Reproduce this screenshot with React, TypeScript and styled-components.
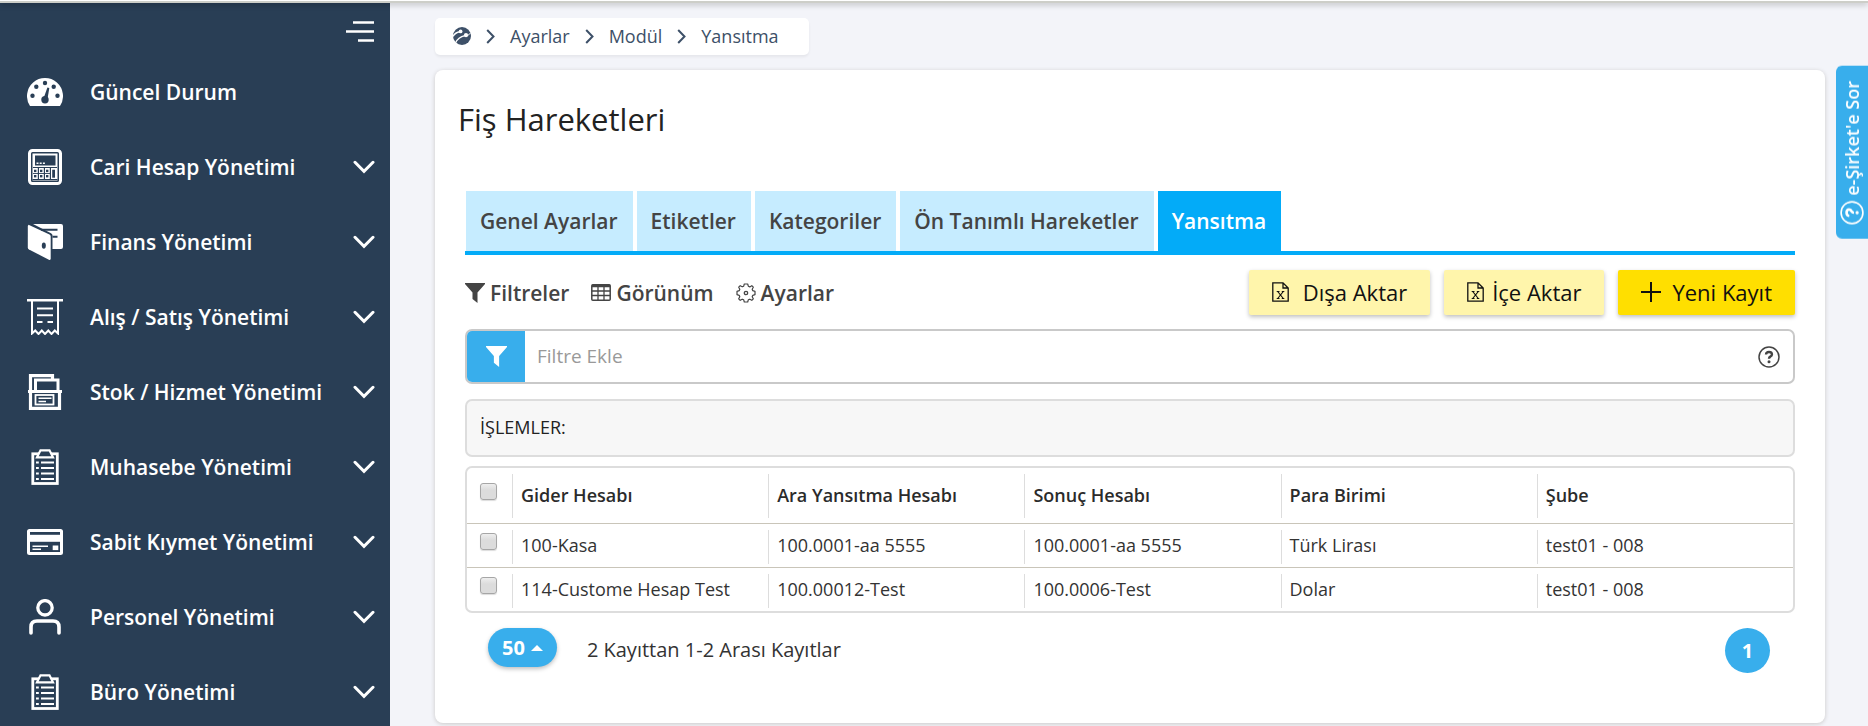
import React from "react";
import styled, { createGlobalStyle, css } from "styled-components";

const navy = "#293e55";
const sky = "#03abf8";
const blue = "#38aeec";

const GlobalStyle = createGlobalStyle`
  * { box-sizing: border-box; }
  body {
    margin: 0;
    background: #f3f4f9;
    color: #2b2b2b;
    font-family: "Open Sans", "Noto Sans", sans-serif;
    font-size: 18px;
  }
  button, input { font-family: inherit; }
  a { color: inherit; text-decoration: none; }
`;

const TopStrip = styled.div`
  position: fixed;
  top: 0;
  left: 0;
  right: 0;
  height: 3px;
  z-index: 2;
  border-top: 1px solid #fff;
  background: #cdcec8;
  box-shadow: 0 1px 6px rgba(0, 0, 0, 0.35);
`;

const Shell = styled.div`
  display: flex;
  min-height: 100vh;
`;

const Sidebar = styled.nav`
  flex: none;
  width: 390px;
  height: 100vh;
  overflow: hidden;
  position: sticky;
  top: 0;
  background: ${navy};
  color: #fff;
`;

const SidebarTop = styled.div`
  display: flex;
  justify-content: flex-end;
  align-items: flex-start;
  height: 54px;
  padding: 20px 16px 0 0;
`;

const IconButton = styled.button`
  display: flex;
  align-items: center;
  justify-content: center;
  padding: 0;
  border: 0;
  background: none;
  color: inherit;
  cursor: pointer;
`;

const Menu = styled.ul`
  margin: 0;
  padding: 0;
  list-style: none;
`;

const MenuLink = styled.a`
  display: flex;
  align-items: center;
  height: 75px;
  padding: 0 15px 0 27px;
  font-size: 21px;
  font-weight: 600;
  svg { flex: none; }
`;

const MenuText = styled.span`
  flex: 1;
  padding-left: 27px;
`;

const Main = styled.main`
  flex: 1;
  min-width: 0;
  padding: 18px 43px 3px 45px;
`;

const Crumbs = styled.nav`
  display: flex;
  align-items: center;
  gap: 15px;
  width: max-content;
  height: 37px;
  padding: 0 30px 0 18px;
  border-radius: 5px;
  background: #fff;
  color: #3d5068;
  box-shadow: 0 2px 3px rgba(0, 0, 0, 0.06);
`;

const CrumbLink = styled.a`
  display: flex;
  line-height: 24px;
  padding-bottom: 1px;
`;

const Card = styled.section`
  margin-top: 15px;
  padding: 29px 30px 50px;
  border-radius: 8px;
  background: #fff;
  box-shadow: 0 1px 4px rgba(60, 50, 30, 0.22);
`;

const Title = styled.h1`
  margin: 0 -7px 52px;
  font-size: 31px;
  line-height: 40px;
  font-weight: 400;
  color: #222;
`;

const Tabs = styled.div`
  display: flex;
  gap: 4px;
  padding-left: 1px;
  border-bottom: 4px solid ${sky};
`;

const Tab = styled.a<{ $active?: boolean }>`
  height: 60px;
  padding: 0 15px 0 14px;
  line-height: 60px;
  font-size: 21px;
  font-weight: 600;
  white-space: nowrap;
  background: #c6ecff;
  color: #444;
  ${(p) =>
    p.$active &&
    css`
      background: ${sky};
      color: #fff;
    `}
`;

const Toolbar = styled.div`
  display: flex;
  align-items: center;
  justify-content: space-between;
  margin-top: 15px;
`;

const Group = styled.div<{ $gap: number }>`
  display: flex;
  align-items: center;
  gap: ${(p) => p.$gap}px;
`;

const ToolButton = styled(IconButton)`
  gap: 5px;
  font-size: 21px;
  font-weight: 600;
  line-height: 30px;
  color: #444;
`;

const ActionButton = styled.button<{ $strong?: boolean; $gap: number }>`
  display: flex;
  align-items: center;
  gap: ${(p) => p.$gap}px;
  height: 45px;
  padding: 0 23px 2px;
  border: 0;
  border-radius: 2px;
  background: ${(p) => (p.$strong ? "#ffdf00" : "#fff5ab")};
  color: #111;
  font-size: 22px;
  font-weight: 500;
  white-space: nowrap;
  box-shadow: 0 2px 4px rgba(0, 0, 0, 0.25);
  cursor: pointer;
`;

const FilterBox = styled.div`
  display: flex;
  height: 55px;
  margin-top: 14px;
  border: 2px solid #c9c9c9;
  border-radius: 7px;
  overflow: hidden;
`;

const FilterButton = styled(IconButton)`
  width: 58px;
  background: ${blue};
  color: #fff;
`;

const FilterInput = styled.input`
  flex: 1;
  min-width: 0;
  padding: 0 12px 2px;
  border: 0;
  outline: 0;
  background: none;
  font-size: 19px;
  &::placeholder { color: #999; opacity: 1; }
`;

const HelpButton = styled(IconButton)`
  width: 48px;
  color: #444;
`;

const Operations = styled.div`
  height: 58px;
  margin-top: 15px;
  padding: 0 13px;
  border: 2px solid #ddd;
  border-radius: 7px;
  background: #f7f7f7;
  line-height: 52px;
  font-weight: 500;
  color: #222;
`;

const TableFrame = styled.div`
  margin-top: 9px;
  border: 2px solid #ddd;
  border-radius: 7px;
  overflow: hidden;
`;

const Table = styled.table`
  width: 100%;
  table-layout: fixed;
  border-spacing: 0;
  text-align: left;
`;

const CheckCol = styled.col`
  width: 45px;
`;

const HeadCell = styled.th`
  padding: 6px 0 5px;
  vertical-align: top;
  font-weight: 600;
`;

const BodyCell = styled.td`
  padding: 6px 0 3px;
  border-top: 1px solid #c9c5b9;
  vertical-align: top;
  color: #333;
`;

const CellText = styled.div<{ $head?: boolean }>`
  height: ${(p) => (p.$head ? 44 : 34)}px;
  padding-left: 8px;
  border-left: 1px solid #ddd;
  line-height: ${(p) => (p.$head ? 42 : 30)}px;
  white-space: nowrap;
`;

const Check = styled.input.attrs({ type: "checkbox" })<{ $head?: boolean }>`
  appearance: none;
  display: block;
  width: 17px;
  height: 17px;
  margin: ${(p) => (p.$head ? 9 : 3)}px 0 0 13px;
  border: 1px solid #a6a6a6;
  border-radius: 3px;
  background: linear-gradient(#eee, #dcdcdc 40%);
  box-shadow: 0 1px 1px rgba(0, 0, 0, 0.14);
  &:checked { background: ${blue}; }
`;

const Footer = styled.div`
  display: flex;
  align-items: flex-start;
  gap: 30px;
  margin-top: 15px;
  padding: 0 25px 0 23px;
`;

const PageSize = styled.button`
  display: flex;
  align-items: center;
  gap: 6px;
  height: 39px;
  padding: 0 14px;
  border: 0;
  border-radius: 20px;
  background: ${blue};
  color: #fff;
  font-size: 20px;
  font-weight: 700;
  box-shadow: 0 2px 4px rgba(0, 0, 0, 0.25);
  cursor: pointer;
`;

const Summary = styled.p`
  flex: 1;
  margin: 0;
  font-size: 20px;
  line-height: 44px;
  color: #333;
`;

const PageLink = styled.a`
  width: 45px;
  height: 45px;
  border-radius: 23px;
  background: ${blue};
  color: #fff;
  font-size: 20px;
  font-weight: 700;
  line-height: 45px;
  text-align: center;
`;

const AskButton = styled.button`
  position: fixed;
  top: 66px;
  right: 0;
  z-index: 3;
  display: flex;
  align-items: center;
  gap: 5px;
  width: 32px;
  padding: 14px 0 15px;
  border: 0;
  border-radius: 0 6px 6px 0;
  background: ${blue};
  color: #fff;
  font-size: 18px;
  font-weight: 600;
  white-space: nowrap;
  writing-mode: vertical-rl;
  transform: rotate(180deg);
  cursor: pointer;
  svg { transform: rotate(90deg); }
`;

const Svg = ({ w, h, children }: { w: number; h: number; children: React.ReactNode }) => (
  <svg width={w} height={h} viewBox={`0 0 ${w} ${h}`} fill="none" stroke="currentColor" aria-hidden="true">
    {children}
  </svg>
);

const Gauge = () => (
  <Svg w={36} h={36}>
    <path d="M3 32A18 18 0 1 1 33 32Z" fill="currentColor" stroke="none" />
    <g fill={navy} stroke="none">
      <circle cx="18" cy="9" r="2.2" />
      <circle cx="9.3" cy="12.7" r="2.2" />
      <circle cx="26.7" cy="12.7" r="2.2" />
      <circle cx="5.5" cy="21.7" r="2.2" />
      <circle cx="30.5" cy="21.7" r="2.2" />
      <circle cx="18" cy="25.7" r="3.7" />
      <path d="M20.4 13.5l1.9.4-1.8 11-3.8-.8z" />
    </g>
  </Svg>
);

const Calculator = () => (
  <Svg w={36} h={36}>
    <rect x="2.5" y="1.5" width="31" height="33" rx="3" strokeWidth="3" />
    <rect x="5.5" y="4.5" width="25" height="27" fill="currentColor" stroke="none" />
    <g fill={navy} stroke="none">
      <rect x="8" y="6.5" width="20.5" height="10" />
      <rect x="6" y="18" width="24" height="1" />
      {[20.7, 26].map((y) => [7, 13, 19].map((x) => <rect key={`${x}-${y}`} x={x} y={y} width="2.4" height="2.4" />))}
      {[10.8, 16.8, 22.8].map((x) => <rect key={x} x={x} y="19" width="1.2" height="12" />)}
      <rect x="6" y="24" width="17" height="0.9" />
      <rect x="25.2" y="20.7" width="2.8" height="8" />
      <rect x="5.5" y="30" width="25" height="1" />
    </g>
    <path d="M9.5 14.2h2M12.7 14.2h2M15.9 14.2h2" strokeWidth="1.6" />
  </Svg>
);

const Wallet = () => (
  <Svg w={36} h={36}>
    <path d="M6 0H34a2 2 0 0 1 2 2V23a2 2 0 0 1-2 2H25.5V11.5Q25.5 10 24 9.3Z" fill="currentColor" stroke="none" />
    <path d="M1.5.8L22.5 10.5q1.2.7 1.2 2V34.5q0 2-1.8 1.2L2 25.5Q.8 24.8.8 23.5V2z" fill="currentColor" stroke="none" />
    <path d="M14 5.8H30.5M25.5 12.7H30.5" stroke={navy} strokeWidth="2" />
    <ellipse cx="16.8" cy="21.6" rx="2" ry="3.2" fill={navy} stroke="none" />
  </Svg>
);

const Receipt = () => (
  <Svg w={36} h={36}>
    <path d="M0 1.3H36" strokeWidth="2.4" />
    <path d="M5 2V34.5L8.2 31.5 11.5 35 14.8 31.5 18 35 21.3 31.5 24.5 35 27.8 31.5 31 34.5V2M10 9.5H26M10 16.3H26M10 23H15.5M20.5 23H26" strokeWidth="2" />
  </Svg>
);

const Stock = () => (
  <Svg w={36} h={36}>
    <path d="M3.5 17V1.7H25.5V5" strokeWidth="3.2" />
    <path d="M8.5 17V6H31V17" strokeWidth="3" />
    <path d="M1 17.5H35" strokeWidth="3" />
    <path d="M3.5 18V34.3H32.5V18" strokeWidth="3.2" />
    <rect x="8.5" y="21" width="18" height="9.5" strokeWidth="1.8" />
    <path d="M11.5 24.2H24.5M11.5 27.5H19" strokeWidth="1.6" />
  </Svg>
);

const Clipboard = () => (
  <Svg w={36} h={36}>
    <rect x="5.8" y="4.8" width="24.5" height="29.7" strokeWidth="2.8" />
    <path d="M10 8.3L13.5 1.3H22.5L26 8.3Z" fill={navy} strokeWidth="2.2" />
    <path d="M9 13.5h2.8M9 19h2.8M9 24.5h2.8M9 30h2.8M14 13.5H27M14 19H27M14 24.5H27M14 30H27" strokeWidth="2" />
  </Svg>
);

const BankCard = () => (
  <Svg w={36} h={36}>
    <rect x="1.5" y="6.5" width="33" height="23" rx="1" strokeWidth="3" />
    <path d="M2 14.3H34" strokeWidth="7" />
    <path d="M5.5 22.3H21M5.5 25.2H14" strokeWidth="1.5" />
    <rect x="25.7" y="21.5" width="5.6" height="4.6" fill="currentColor" stroke="none" />
  </Svg>
);

const Person = () => (
  <Svg w={36} h={36}>
    <circle cx="18" cy="8.8" r="7.2" strokeWidth="3.3" />
    <path d="M4 34V28Q4 22 10 22H26Q32 22 32 28V34" strokeWidth="3.6" strokeLinecap="round" />
  </Svg>
);

const ChevronDown = () => (
  <Svg w={22} h={14}>
    <path d="M2 2.3L11 11.3 20 2.3" strokeWidth="3" strokeLinecap="round" />
  </Svg>
);

const ChevronRight = () => (
  <Svg w={9} h={15}>
    <path d="M1.2 1L7.5 7.5 1.2 14" strokeWidth="2" />
  </Svg>
);

const Burger = () => (
  <Svg w={28} h={24}>
    <path d="M7 2.5H28M0 11.5H28M12 20.5H28" strokeWidth="2.6" />
  </Svg>
);

const Logo = () => (
  <Svg w={18} h={18}>
    <circle cx="9" cy="9" r="9" fill="currentColor" stroke="none" />
    <path d="M0 9.5Q2 5.5 7 4.8M2.5 16Q5 10 12 8.600" stroke="#fff" strokeWidth="1.4" />
    <path d="M12.500 9Q16 8.500 18 5.500" stroke="#fff" strokeWidth="1" />
    <circle cx="7.6" cy="4.4" r="1.9" fill="#fff" stroke="none" />
    <circle cx="13" cy="8.2" r="2.1" fill="#fff" stroke="none" />
  </Svg>
);

const Funnel = ({ size }: { size: number }) => (
  <svg width={size} height={size} viewBox="0 0 20 20" fill="currentColor" aria-hidden="true">
    <path d="M0 0H20V1L12.5 9.5V20L7.5 16V9.5L0 1Z" />
  </svg>
);

const Grid = () => (
  <Svg w={20} h={17}>
    <rect x=".8" y=".8" width="18.4" height="15.4" rx="1" strokeWidth="1.5" />
    <path d="M1 2H19" strokeWidth="2.5" />
    <path d="M1 7H19M1 11.5H19M7 3V16M13 3V16" strokeWidth="1.3" />
  </Svg>
);

const Gear = () => (
  <Svg w={20} h={20}>
    <path
      d="M8.3 1H11.7L12.3 3.2 13.8 3.9 15.8 2.7 17.3 4.2 16.2 6.2 16.8 7.7 19 8.3V11.7L16.8 12.3 16.2 13.8 17.3 15.8 15.8 17.3 13.8 16.2 12.3 16.8 11.7 19H8.3L7.7 16.8 6.2 16.2 4.2 17.3 2.7 15.8 3.8 13.8 3.2 12.3 1 11.7V8.3L3.2 7.7 3.8 6.2 2.7 4.2 4.2 2.7 6.2 3.8 7.7 3.2Z"
      strokeWidth="1.2"
      strokeLinejoin="round"
    />
    <circle cx="10" cy="10" r="1.7" strokeWidth="1.3" />
  </Svg>
);

const Sheet = () => (
  <Svg w={17} h={20}>
    <path d="M.8.8H11L16.2 6V19.2H.8ZM11 1V6H16" strokeWidth="1.3" />
    <path d="M5.7 9.5L11.3 16.5M11.3 9.5L5.7 16.5M4.7 9.5H7.5M9.8 9.5H12.3M4.7 16.5H7.5M9.8 16.5H12.3" strokeWidth="1.2" />
  </Svg>
);

const Plus = () => (
  <Svg w={20} h={20}>
    <path d="M10 0V20M0 10H20" strokeWidth="2" />
  </Svg>
);

const Help = ({ size }: { size: number }) => (
  <svg width={size} height={size} viewBox="0 0 22 22" fill="none" stroke="currentColor" aria-hidden="true">
    <circle cx="11" cy="11" r="10" strokeWidth="1.5" />
    <path d="M8 8.5Q8.2 6 11 6T14 8.3Q14 9.8 12.3 10.6Q11 11.3 11 12.8" strokeWidth="2.4" />
    <circle cx="11" cy="15.7" r="1.5" fill="currentColor" stroke="none" />
  </svg>
);

const Caret = () => (
  <svg width="12" height="6" viewBox="0 0 12 6" fill="currentColor" aria-hidden="true">
    <path d="M0 6L6 0L12 6Z" />
  </svg>
);

const menu = [
  { text: "Güncel Durum", Icon: Gauge, leaf: true },
  { text: "Cari Hesap Yönetimi", Icon: Calculator },
  { text: "Finans Yönetimi", Icon: Wallet },
  { text: "Alış / Satış Yönetimi", Icon: Receipt },
  { text: "Stok / Hizmet Yönetimi", Icon: Stock },
  { text: "Muhasebe Yönetimi", Icon: Clipboard },
  { text: "Sabit Kıymet Yönetimi", Icon: BankCard },
  { text: "Personel Yönetimi", Icon: Person },
  { text: "Büro Yönetimi", Icon: Clipboard },
];

const tabs = ["Genel Ayarlar", "Etiketler", "Kategoriler", "Ön Tanımlı Hareketler", "Yansıtma"];
const columns = ["Gider Hesabı", "Ara Yansıtma Hesabı", "Sonuç Hesabı", "Para Birimi", "Şube"];
const rows = [
  ["100-Kasa", "100.0001-aa 5555", "100.0001-aa 5555", "Türk Lirası", "test01 - 008"],
  ["114-Custome Hesap Test", "100.00012-Test", "100.0006-Test", "Dolar", "test01 - 008"],
];

export default function App() {
  return (
    <>
      <GlobalStyle />
      <TopStrip />
      <Shell>
        <Sidebar aria-label="Ana menü">
          <SidebarTop>
            <IconButton aria-label="Menü">
              <Burger />
            </IconButton>
          </SidebarTop>
          <Menu>
            {menu.map(({ text, Icon, leaf }) => (
              <li key={text}>
                <MenuLink href="#">
                  <Icon />
                  <MenuText>{text}</MenuText>
                  {!leaf && <ChevronDown />}
                </MenuLink>
              </li>
            ))}
          </Menu>
        </Sidebar>
        <Main>
          <Crumbs aria-label="Sayfa yolu">
            <CrumbLink href="#" aria-label="Ana sayfa"><Logo /></CrumbLink>
            {["Ayarlar", "Modül", "Yansıtma"].map((c) => (
              <React.Fragment key={c}>
                <ChevronRight />
                <CrumbLink href="#">{c}</CrumbLink>
              </React.Fragment>
            ))}
          </Crumbs>
          <Card>
            <Title>Fiş Hareketleri</Title>
            <Tabs>
              {tabs.map((t) => (
                <Tab key={t} href="#" $active={t === "Yansıtma"}>{t}</Tab>
              ))}
            </Tabs>
            <Toolbar>
              <Group $gap={22}>
                <ToolButton><Funnel size={20} />Filtreler</ToolButton>
                <ToolButton><Grid />Görünüm</ToolButton>
                <ToolButton><Gear />Ayarlar</ToolButton>
              </Group>
              <Group $gap={14}>
                <ActionButton $gap={14}><Sheet />Dışa Aktar</ActionButton>
                <ActionButton $gap={8}><Sheet />İçe Aktar</ActionButton>
                <ActionButton $gap={11} $strong><Plus />Yeni Kayıt</ActionButton>
              </Group>
            </Toolbar>
            <FilterBox>
              <FilterButton aria-label="Filtrele"><Funnel size={21} /></FilterButton>
              <FilterInput placeholder="Filtre Ekle" aria-label="Filtre Ekle" />
              <HelpButton aria-label="Yardım"><Help size={22} /></HelpButton>
            </FilterBox>
            <Operations>İŞLEMLER:</Operations>
            <TableFrame>
              <Table>
                <colgroup>
                  <CheckCol />
                  {columns.map((c) => <col key={c} />)}
                </colgroup>
                <thead>
                  <tr>
                    <HeadCell><Check $head aria-label="Tümünü seç" /></HeadCell>
                    {columns.map((c) => (
                      <HeadCell key={c} scope="col"><CellText $head>{c}</CellText></HeadCell>
                    ))}
                  </tr>
                </thead>
                <tbody>
                  {rows.map((r) => (
                    <tr key={r[0]}>
                      <BodyCell><Check aria-label={r[0]} /></BodyCell>
                      {r.map((v, i) => (
                        <BodyCell key={i}><CellText>{v}</CellText></BodyCell>
                      ))}
                    </tr>
                  ))}
                </tbody>
              </Table>
            </TableFrame>
            <Footer>
              <PageSize>50 <Caret /></PageSize>
              <Summary>2 Kayıttan 1-2 Arası Kayıtlar</Summary>
              <PageLink href="#">1</PageLink>
            </Footer>
          </Card>
        </Main>
      </Shell>
      <AskButton><Help size={24} />e-Şirket'e Sor</AskButton>
    </>
  );
}
